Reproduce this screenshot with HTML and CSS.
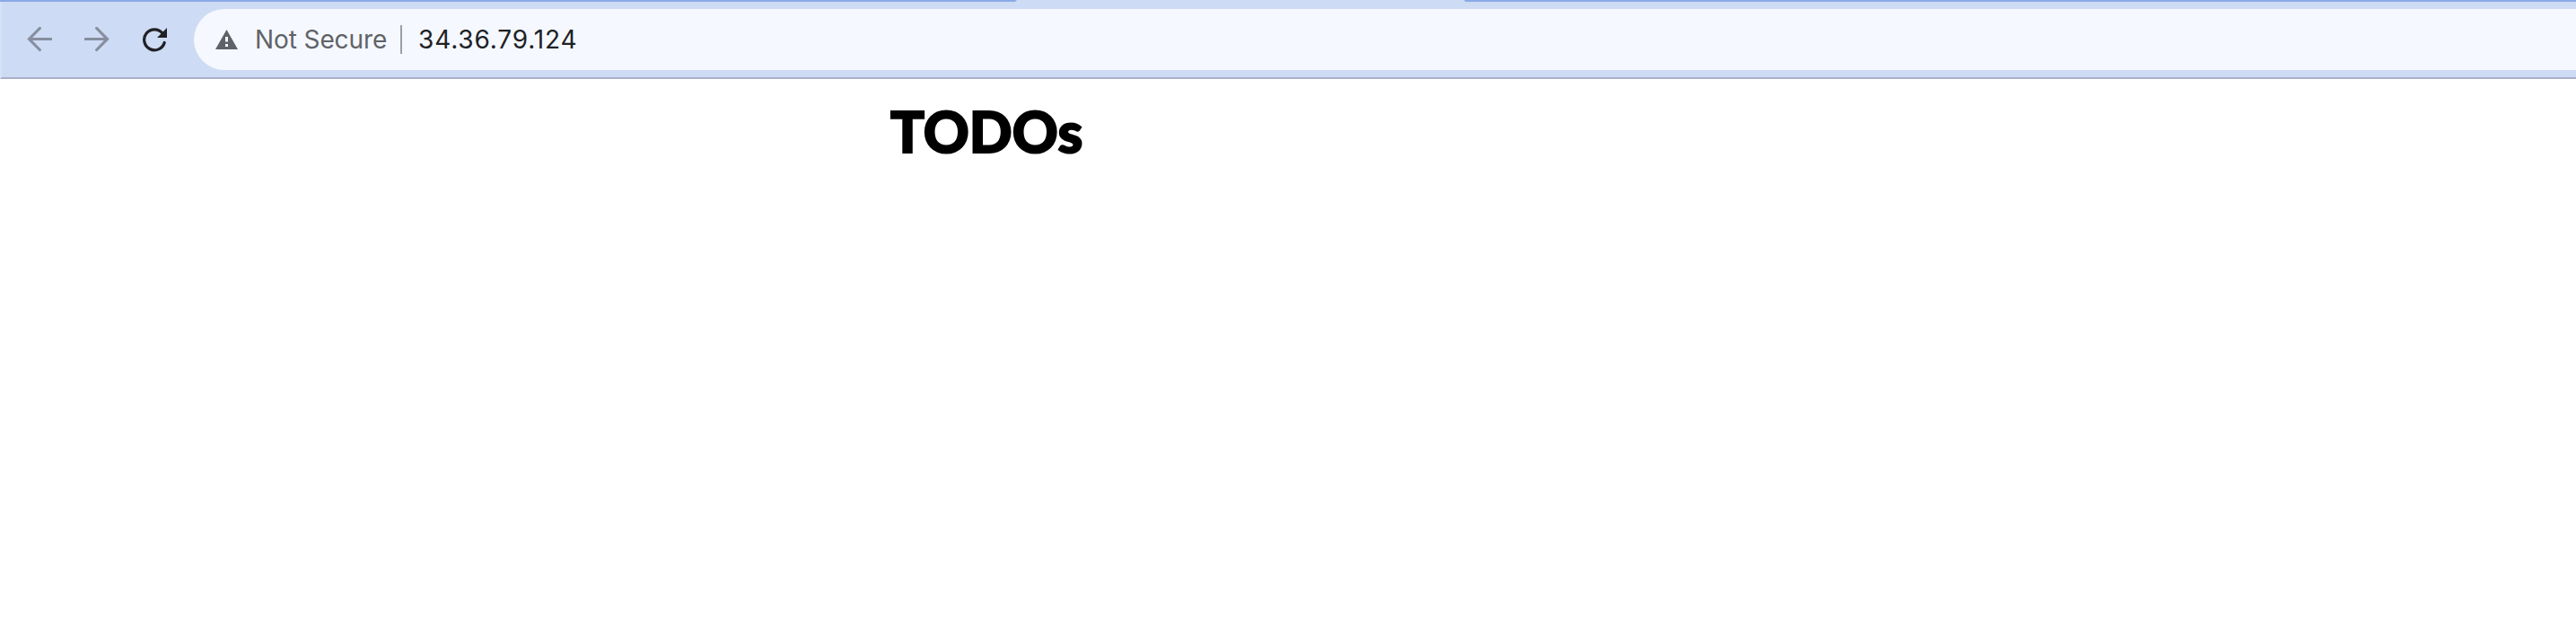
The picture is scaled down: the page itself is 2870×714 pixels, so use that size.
FILE: index.html
```html
<!DOCTYPE html>
<html lang="en">
<head>
<meta charset="utf-8">
<title>TODOs</title>
<link rel="stylesheet" href="styles.css">
</head>
<body>
<div class="tab-strip"><span class="active-tab"></span></div>
<header class="toolbar">
  <nav class="nav">
    <svg class="icon muted" viewBox="0 0 28 28"><path d="M27 13.500H3M14.300 1.500L2.500 13.500L14.300 25.500"/></svg>
    <svg class="icon muted" viewBox="0 0 28 28"><path d="M1 13.500H25M13.700 1.500L25.500 13.500L13.700 25.500"/></svg>
    <svg class="icon reload" viewBox="0 0 28 28"><path d="M23 7A11.500 11.500 0 1 0 25.200 17.500"/><path class="fill" d="M28 1V12H17Z"/></svg>
  </nav>
  <div class="address">
    <svg class="warning" viewBox="0 0 25 22"><path d="M12.500 0L25 22H0ZM11 8V13.500H14V8ZM11 16V19H14V16Z" fill-rule="evenodd"/></svg>
    <span class="security">Not Secure</span>
    <span class="divider"></span>
    <span class="url">34.36.79.124</span>
  </div>
</header>
<main class="content"><h1 class="title">TODOs</h1></main>
</body>
</html>
```
FILE: styles.css
```css
* { box-sizing: border-box; }
body { margin: 0; background: #fff; font-family: Inter, sans-serif; overflow: hidden; }
.tab-strip { height: 2px; background: #8aabe4; padding-left: 1131px; }
.active-tab { display: block; width: 502px; height: 2px; background: #cedbf4; clip-path: polygon(2px 0, 500px 0, 100% 100%, 0 100%); }
.toolbar { display: flex; height: 86px; padding-top: 8px; background: #cedbf4; border-bottom: 2px solid #a8b0c8; border-left: 2px solid #d6e1f6; }
.nav { display: flex; gap: 36px; width: 214px; padding: 20px 0 0 28px; }
.icon { width: 28px; height: 28px; fill: none; stroke-width: 3.2; stroke-linecap: round; }
.muted { stroke: #868e9f; }
.reload { stroke: #202124; }
.reload .fill { fill: #202124; stroke: none; }
.address { display: flex; align-items: center; flex: 1; height: 68px; padding-left: 24px; background: #f5f8fe; border-radius: 34px 0 0 34px; font-size: 28px; line-height: 34px; white-space: nowrap; }
.warning { width: 25px; height: 22px; fill: #5f6368; }
.security { width: 160px; margin-left: 19px; color: #5f6368; letter-spacing: -0.1px; }
.divider { width: 2px; height: 32px; margin-left: 2px; background: #9b9fa4; }
.url { margin-left: 18px; color: #202124; letter-spacing: 0.85px; }
.content { padding: 20px 0 0 992px; }
.title { margin: 0; font-family: Lato, sans-serif; font-weight: 900; font-size: 63px; line-height: 76px; letter-spacing: 0; color: #000; -webkit-text-stroke: 2px #000; }
```
